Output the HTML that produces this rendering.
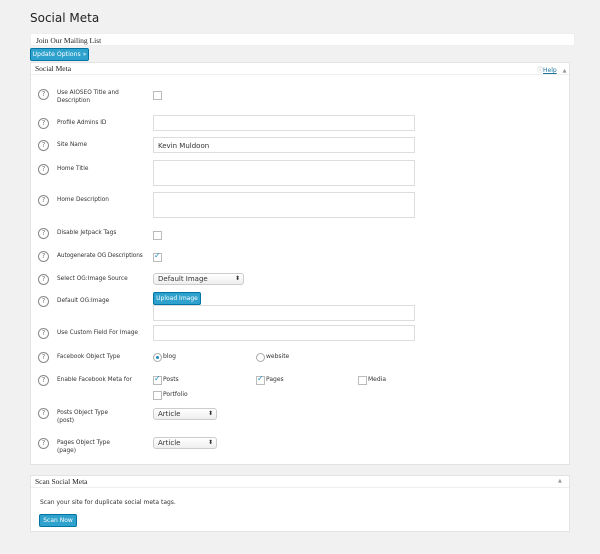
<!DOCTYPE html>
<html><head><style>
body{margin:0;width:600px;height:554px;background:#f1f1f1;font-family:"DejaVu Sans","Liberation Sans",sans-serif;font-size:6px;color:#333;position:relative;overflow:hidden}
.a{position:absolute}
.box{background:#fff;border:1px solid #e3e3e3;box-sizing:border-box}
.serif{font-family:"Liberation Serif",serif;font-size:7.5px;color:#222}
.q{position:absolute;left:38px;width:9px;height:9px;border:1px solid #888;border-radius:50%;font-size:7px;line-height:9px;text-align:center;color:#777}
.lbl{position:absolute;left:57px;line-height:8px;font-size:5.8px}
.in{position:absolute;left:153px;width:262px;background:#fff;border:1px solid #ddd;box-sizing:border-box}
.cb{position:absolute;width:7px;height:7px;border:1px solid #bbb;background:#fff}
.ck::after{content:"✓";position:absolute;left:0;top:-3px;font-size:8px;color:#1e8cbe}
.btn{position:absolute;background:#2ea2cc;border:1px solid #0074a2;color:#fff;box-sizing:border-box;text-align:center;border-radius:2px}
.sel{position:absolute;left:153px;height:12px;border:1px solid #ccc;border-radius:3px;background:linear-gradient(#fff,#eee);box-sizing:border-box;padding-left:4px;line-height:10px;font-size:7px}
.sel::after{content:"⬍";position:absolute;right:3px;top:0;font-size:6px}
.rad{position:absolute;width:7px;height:7px;border:1px solid #aaa;border-radius:50%;background:#fff}
</style></head><body>
<div class="a" style="left:30px;top:11px;font-size:12px;color:#222">Social Meta</div>
<div class="a box serif" style="left:30px;top:33px;width:545px;height:13px;padding:2px 5px;border-color:#eee">Join Our Mailing List</div>
<div class="btn" style="left:30px;top:48px;width:59px;height:13px;line-height:11px;font-size:6.2px">Update Options »</div>
<div class="a box" style="left:30px;top:62px;width:540px;height:403px"></div>
<div class="a" style="left:31px;top:74px;width:538px;height:1px;background:#eee"></div>
<div class="a serif" style="left:35px;top:64px">Social Meta</div>
<div class="a" style="left:537px;top:65px;font-size:6px;color:#21759b"><span style="color:#999">ⓘ</span><u>Help</u> <span style="color:#999;font-size:5px;margin-left:4px">▲</span></div>

<div class="q" style="top:89px">?</div><div class="lbl" style="top:89px">Use AIOSEO Title and<br>Description</div><div class="cb" style="left:153px;top:91px"></div>
<div class="q" style="top:118px">?</div><div class="lbl" style="top:119px">Profile Admins ID</div><div class="in" style="top:115px;height:16px"></div>
<div class="q" style="top:140px">?</div><div class="lbl" style="top:141px">Site Name</div><div class="in" style="top:137px;height:16px;padding:4px 4px;font-size:7px">Kevin Muldoon</div>
<div class="q" style="top:164px">?</div><div class="lbl" style="top:165px">Home Title</div><div class="in" style="top:160px;height:26px"></div>
<div class="q" style="top:195px">?</div><div class="lbl" style="top:196px">Home Description</div><div class="in" style="top:192px;height:26px"></div>
<div class="q" style="top:228px">?</div><div class="lbl" style="top:229px">Disable Jetpack Tags</div><div class="cb" style="left:153px;top:231px"></div>
<div class="q" style="top:251px">?</div><div class="lbl" style="top:252px;letter-spacing:-0.1px">Autogenerate OG Descriptions</div><div class="cb ck" style="left:153px;top:253px"></div>
<div class="q" style="top:274px">?</div><div class="lbl" style="top:275px">Select OG:Image Source</div><div class="sel" style="top:273px;width:91px">Default Image</div>
<div class="q" style="top:296px">?</div><div class="lbl" style="top:297px">Default OG:Image</div><div class="btn" style="left:153px;top:292px;width:48px;height:13px;line-height:11px">Upload Image</div><div class="in" style="top:305px;height:16px"></div>
<div class="q" style="top:328px">?</div><div class="lbl" style="top:329px">Use Custom Field For Image</div><div class="in" style="top:325px;height:16px"></div>
<div class="q" style="top:352px">?</div><div class="lbl" style="top:353px">Facebook Object Type</div>
<div class="rad" style="left:153px;top:353px"><div style="position:absolute;left:2px;top:2px;width:3px;height:3px;border-radius:50%;background:#1e8cbe"></div></div><div class="a" style="left:163px;top:353px">blog</div>
<div class="rad" style="left:256px;top:353px"></div><div class="a" style="left:266px;top:353px">website</div>
<div class="q" style="top:375px">?</div><div class="lbl" style="top:376px">Enable Facebook Meta for</div>
<div class="cb ck" style="left:153px;top:376px"></div><div class="a" style="left:163px;top:376px">Posts</div>
<div class="cb ck" style="left:256px;top:376px"></div><div class="a" style="left:266px;top:376px">Pages</div>
<div class="cb" style="left:358px;top:376px"></div><div class="a" style="left:368px;top:376px">Media</div>
<div class="cb" style="left:153px;top:391px"></div><div class="a" style="left:163px;top:391px">Portfolio</div>
<div class="q" style="top:408px">?</div><div class="lbl" style="top:409px">Posts Object Type<br>(post)</div><div class="sel" style="top:408px;width:64px">Article</div>
<div class="q" style="top:438px">?</div><div class="lbl" style="top:439px">Pages Object Type<br>(page)</div><div class="sel" style="top:437px;width:64px">Article</div>

<div class="a box" style="left:30px;top:475px;width:540px;height:57px"></div>
<div class="a" style="left:31px;top:487px;width:538px;height:1px;background:#eee"></div>
<div class="a serif" style="left:35px;top:477px">Scan Social Meta</div>
<div class="a" style="left:558px;top:478px;font-size:5px;color:#999">▲</div>
<div class="a" style="left:40px;top:499px">Scan your site for duplicate social meta tags.</div>
<div class="btn" style="left:39px;top:514px;width:38px;height:13px;line-height:11px">Scan Now</div>
</body></html>
